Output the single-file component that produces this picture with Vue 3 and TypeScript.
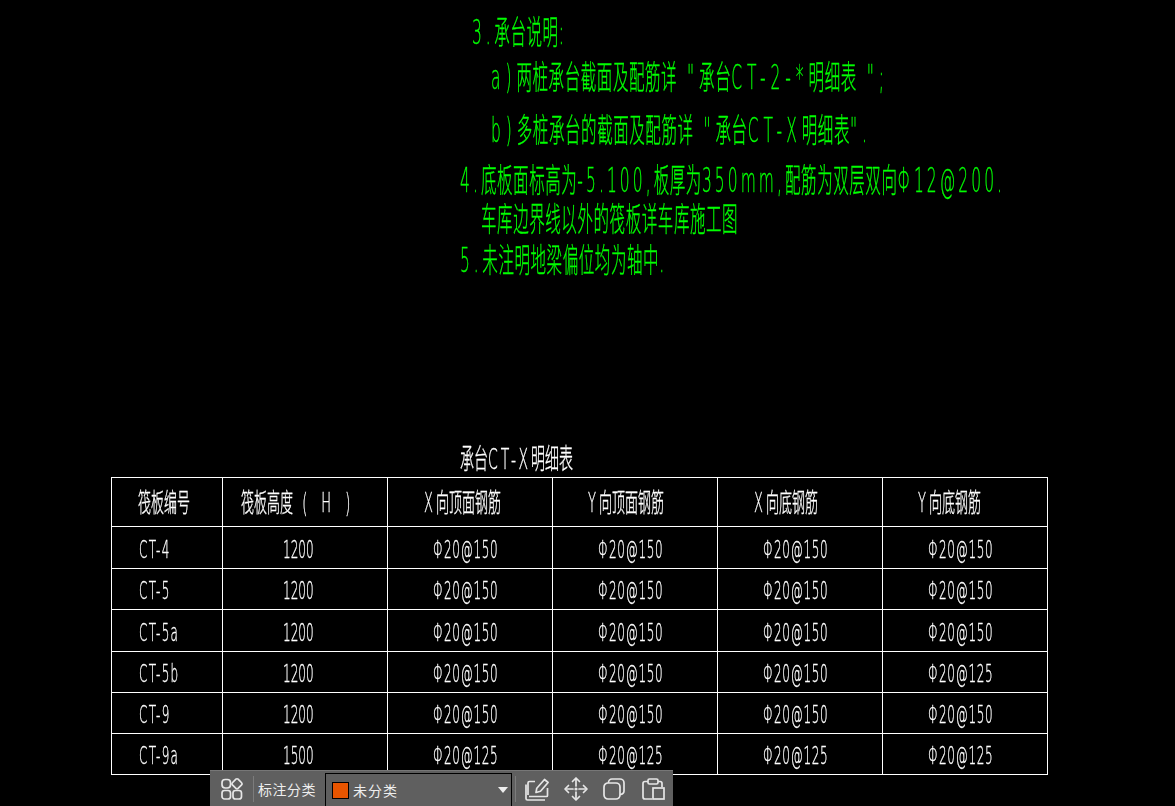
<script setup lang="ts">
type Note = { text: string; x: number; y: number; gap: number }
type Run = { text: string; kind: string }

const notes: Note[] = [
  { text: '3.承台说明:', x: 472, y: 15, gap: 8 },
  { text: 'a)两桩承台截面及配筋详 "承台CT-2-*明细表 ";', x: 491, y: 60, gap: 10.5 },
  { text: 'b)多桩承台的截面及配筋详 "承台CT-X明细表".', x: 491, y: 113, gap: 10.5 },
  { text: '4.底板面标高为-5.100,板厚为350mm,配筋为双层双向Φ12@200.', x: 460, y: 163, gap: 6.5 },
  { text: '车库边界线以外的筏板详车库施工图', x: 481, y: 202, gap: 6 },
  { text: '5.未注明地梁偏位均为轴中.', x: 460, y: 243, gap: 8 }
]

const headers: string[] = ['筏板编号', '筏板高度 ( H )', 'X向顶面钢筋', 'Y向顶面钢筋', 'X向底钢筋', 'Y向底钢筋']
const rows: string[][] = [
  ['CT-4', '1200', 'Φ20@150', 'Φ20@150', 'Φ20@150', 'Φ20@150'],
  ['CT-5', '1200', 'Φ20@150', 'Φ20@150', 'Φ20@150', 'Φ20@150'],
  ['CT-5a', '1200', 'Φ20@150', 'Φ20@150', 'Φ20@150', 'Φ20@150'],
  ['CT-5b', '1200', 'Φ20@150', 'Φ20@150', 'Φ20@150', 'Φ20@125'],
  ['CT-9', '1200', 'Φ20@150', 'Φ20@150', 'Φ20@150', 'Φ20@150'],
  ['CT-9a', '1500', 'Φ20@125', 'Φ20@125', 'Φ20@125', 'Φ20@125']
]

function runs(text: string): Run[] {
  const parts = text.match(/[\u4e00-\u9fff]+|[^\u4e00-\u9fff]+/g) ?? []
  return parts.map((p) => ({ text: p, kind: /[\u4e00-\u9fff]/.test(p) ? 'cjk' : 'lat' }))
}
</script>

<template>
  <div class="stage">
    <div class="drawing">
      <div
        v-for="n in notes"
        :key="n.text"
        class="note"
        :style="{ left: n.x + 'px', top: n.y + 'px', '--gap': n.gap + 'px' }"
      >
        <span v-for="(r, i) in runs(n.text)" :key="i" :class="r.kind">{{ r.text }}</span>
      </div>

      <div class="table-title">
        <span v-for="(r, i) in runs('承台CT-X明细表')" :key="i" :class="r.kind">{{ r.text }}</span>
      </div>

      <div class="table">
        <div v-for="(h, c) in headers" :key="h" class="cell head" :class="'hc' + c">
          <span class="txt">
            <span v-for="(r, i) in runs(h)" :key="i" :class="r.kind">{{ r.text }}</span>
          </span>
        </div>
        <template v-for="(row, ri) in rows" :key="ri">
          <div v-for="(v, c) in row" :key="c" class="cell body" :class="'bc' + c">
            <span class="txt">{{ v }}</span>
          </div>
        </template>
      </div>
    </div>

    <div class="toolbar">
      <button class="tool first" aria-label="分类">
        <svg width="24" height="24" viewBox="0 0 24 24" fill="none" stroke="#e6e6e6" stroke-width="1.7">
          <rect x="2" y="2.5" width="8.5" height="8.5" rx="3.2" />
          <rect x="13" y="2.8" width="8" height="8" rx="1.5" transform="rotate(45 17 6.8)" />
          <rect x="2" y="13.5" width="8.5" height="8.5" rx="2.5" />
          <rect x="13" y="13.5" width="8.5" height="8.5" rx="2.5" />
        </svg>
      </button>
      <span class="sep"></span>
      <span class="label">标注分类</span>
      <div class="select">
        <span class="swatch"></span>
        <span class="value">未分类</span>
        <span class="caret"></span>
      </div>
      <span class="sep sep2"></span>
      <button class="tool" aria-label="编辑">
        <svg width="26" height="26" viewBox="0 0 26 26" fill="none" stroke="#e6e6e6" stroke-width="1.7" stroke-linejoin="round">
          <path d="M11 5.5H5.5a1.5 1.5 0 0 0-1.5 1.5V19" />
          <path d="M2 8.5V22.5a1.5 1.5 0 0 0 1.5 1.5H21" />
          <path d="M5 20.5h17.5a1 1 0 0 0 1-1V12" />
          <path d="M12 16.5l.8-4.3L20.5 3.5l3.6 3-7.6 8.8z" />
        </svg>
      </button>
      <button class="tool" aria-label="移动">
        <svg width="26" height="26" viewBox="0 0 26 26" fill="none" stroke="#e6e6e6" stroke-width="1.7" stroke-linecap="round" stroke-linejoin="round">
          <path d="M9.5 5.5L13 2l3.5 3.5M9.5 20.5L13 24l3.5-3.5M5.5 9.5L2 13l3.5 3.5M20.5 9.5L24 13l-3.5 3.5" />
          <path d="M13 3v7M13 16v7M3 13h7M16 13h7" />
          <circle cx="13" cy="13" r="1.6" fill="#e6e6e6" stroke="none" />
        </svg>
      </button>
      <button class="tool" aria-label="复制">
        <svg width="26" height="26" viewBox="0 0 26 26" fill="none" stroke="#e6e6e6" stroke-width="1.7">
          <rect x="3" y="7" width="16" height="16" rx="4" />
          <path d="M7.5 7V6.5a3.5 3.5 0 0 1 3.5-3.5h8a4 4 0 0 1 4 4v8a3.5 3.5 0 0 1-3.5 3.5H19" />
        </svg>
      </button>
      <button class="tool" aria-label="粘贴">
        <svg width="26" height="26" viewBox="0 0 26 26" fill="none" stroke="#e6e6e6" stroke-width="1.7">
          <path d="M8 5.5H5a2 2 0 0 0-2 2V21a2 2 0 0 0 2 2h7" />
          <path d="M18 5.5h2a2 2 0 0 1 2 2V11" />
          <rect x="8" y="3" width="10" height="5" rx="1.5" />
          <rect x="13" y="12" width="11" height="11" />
        </svg>
      </button>
    </div>
  </div>
</template>

<style>
html,
body {
  margin: 0;
  background: #000;
}
</style>

<style scoped>
.stage {
  position: relative;
  width: 1175px;
  height: 806px;
  overflow: hidden;
  background: #000;
}

.drawing {
  position: absolute;
  inset: 0;
  filter: brightness(2) contrast(1.5);
}

.note,
.table-title,
.txt {
  white-space: pre;
  transform-origin: left center;
  -webkit-text-stroke: 0.35px currentColor;
}

.cjk {
  font-family: "Noto Sans CJK SC", sans-serif;
  font-weight: 300;
}

.lat {
  font-family: "DejaVu Sans", sans-serif;
  font-weight: 200;
}

.note {
  position: absolute;
  color: #00ff00;
  font-size: 33px;
  line-height: 30px;
  transform: scaleX(0.47);
}

.note .cjk {
  letter-spacing: 1.2px;
}

.note .lat {
  letter-spacing: var(--gap);
}

.table-title {
  position: absolute;
  left: 460px;
  top: 440px;
  color: #fff;
  font-size: 28px;
  line-height: 34px;
  transform: scaleX(0.5);
}

.table-title .lat {
  letter-spacing: 6px;
}

.table {
  position: absolute;
  left: 111px;
  top: 477px;
  display: grid;
  grid-template-columns: 111px repeat(5, 165px);
  grid-template-rows: 49px 42px 41px 42px 41px 41px 41px;
  border-left: 1px solid #fff;
  border-top: 1px solid #fff;
  color: #fff;
}

.cell {
  display: flex;
  align-items: center;
  box-sizing: border-box;
  border-right: 1px solid #fff;
  border-bottom: 1px solid #fff;
  overflow: hidden;
}

.txt {
  display: inline-block;
}

.head .txt {
  font-size: 26px;
  line-height: 34px;
  transform: scaleX(0.5);
}

.head .lat {
  letter-spacing: 6px;
}

.hc1 .lat {
  letter-spacing: 10px;
}

.body {
  padding-top: 4px;
}

.body .txt {
  font-family: "DejaVu Sans", sans-serif;
  font-weight: 200;
  font-size: 24px;
  line-height: 28px;
  transform: scaleX(0.5);
}

.bc0 .txt {
  letter-spacing: 2.5px;
}

.bc2 .txt,
.bc3 .txt,
.bc4 .txt,
.bc5 .txt {
  letter-spacing: 1.4px;
}

.hc0 { padding-left: 26px; }
.hc1 { padding-left: 18px; }
.hc2 { padding-left: 36px; }
.hc3 { padding-left: 35px; }
.hc4 { padding-left: 36px; }
.hc5 { padding-left: 35px; }

.bc0 { padding-left: 27px; }
.bc1 { padding-left: 60px; }
.bc2,
.bc3,
.bc4,
.bc5 { padding-left: 45px; }

.toolbar {
  position: absolute;
  left: 210px;
  bottom: 0;
  width: 463px;
  height: 36px;
  box-sizing: border-box;
  display: flex;
  align-items: center;
  background: #5f5f5f;
  border-top: 1px solid #777;
  color: #eee;
  font-family: "Noto Sans CJK SC", sans-serif;
  font-size: 14px;
}

.tool {
  width: 38.5px;
  height: 100%;
  padding: 0;
  display: flex;
  align-items: center;
  justify-content: center;
  background: none;
  border: 0;
}

.tool.first {
  width: 43px;
}

.sep {
  width: 1px;
  height: 26px;
  background: #7c7c7c;
}

.label {
  margin-left: 4px;
  width: 67px;
  letter-spacing: 0.5px;
}

.select {
  flex: none;
  width: 187px;
  height: 33px;
  margin-top: 2px;
  box-sizing: border-box;
  display: flex;
  align-items: center;
  border: 1px solid #000;
  border-bottom: 0;
}

.swatch {
  width: 15px;
  height: 15px;
  margin-left: 6px;
  background: #e85500;
  border: 1px solid #000;
}

.value {
  margin-left: 4px;
  letter-spacing: 1px;
}

.caret {
  margin-left: auto;
  margin-right: 3px;
  width: 0;
  height: 0;
  border-left: 5px solid transparent;
  border-right: 5px solid transparent;
  border-top: 6px solid #eee;
}

.sep2 {
  margin-left: 3px;
  margin-right: 2px;
}
</style>
